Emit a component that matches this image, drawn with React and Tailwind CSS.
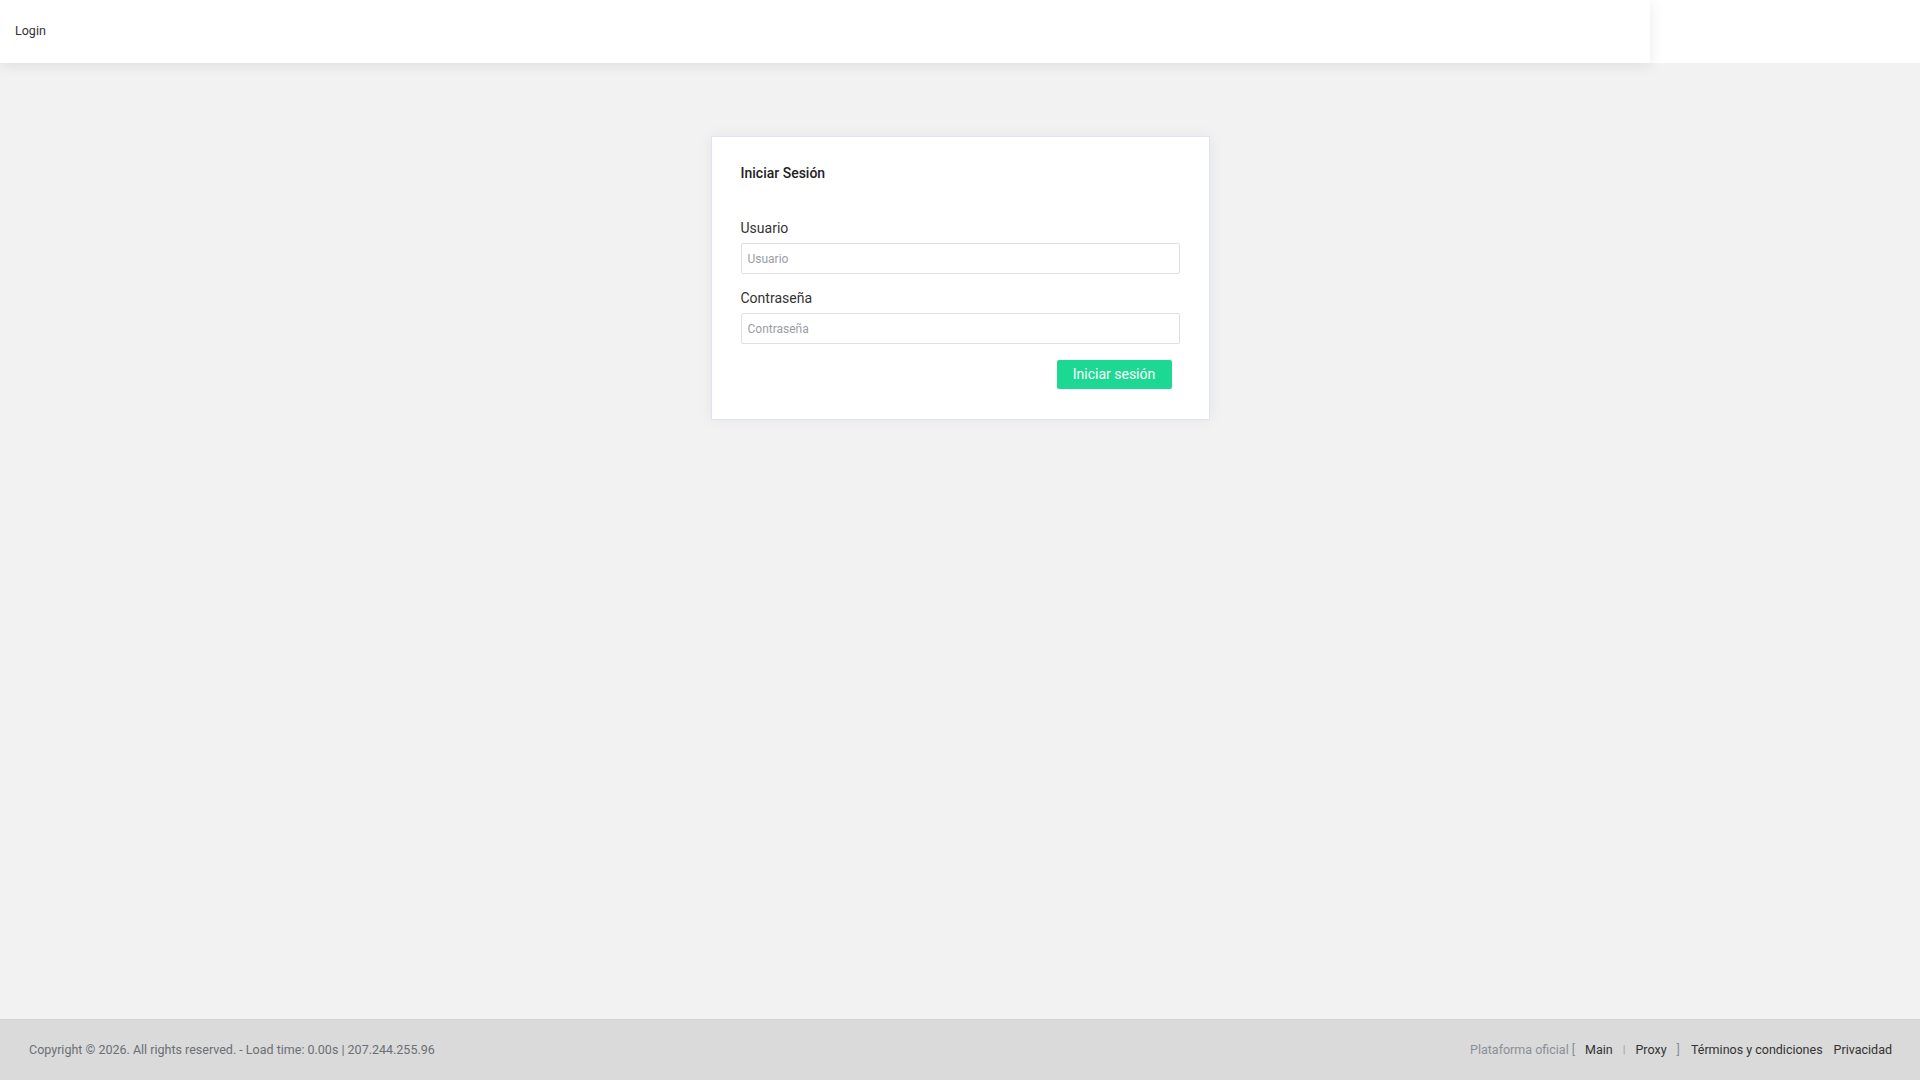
import React from 'react';

// Pantalla de acceso: barra superior, tarjeta de inicio de sesión y pie.

const font = { fontFamily: 'Roboto, "Noto Sans", sans-serif' };

const Field = ({ label, type = 'text', placeholder }) => (
  <div className="flex flex-col">
    <label className="text-[14px] leading-[20px] text-[#333]">{label}</label>
    <input
      type={type}
      placeholder={placeholder}
      className="mt-[5px] h-[31px] w-full rounded-[2px] border border-[#dde1e6] bg-white px-[6px] text-[12px] text-[#333] outline-none placeholder:text-[#9a9ea4]"
    />
  </div>
);

export default function App() {
  return (
    <div className="flex min-h-screen flex-col bg-[#f2f2f2]" style={font}>
      {/* Top bar */}
      <div className="flex h-[63px] bg-white">
        <div className="relative z-10 flex w-[1650px] items-center bg-white px-[15px] shadow-[0_2px_14px_rgba(0,0,0,0.09)]">
          <span className="text-[12.5px] text-[#333]">Login</span>
        </div>
        <div className="flex-1 bg-white" />
      </div>

      {/* Main */}
      <main className="flex flex-1 justify-center pt-[73px]">
        <div className="h-[284px] w-[499px] border border-[#dde6f0] bg-white px-[29px] pt-[26px] shadow-[0_0_14px_rgba(0,0,0,0.06)]">
          <h2 className="text-[14px] font-medium leading-[20px] text-[#222]">Iniciar Sesión</h2>
          <div className="mt-[35px] flex flex-col gap-[14px]">
            <Field label="Usuario" placeholder="Usuario" />
            <Field label="Contraseña" type="password" placeholder="Contraseña" />
          </div>
          <div className="mt-[16px] flex justify-end pr-[8px]">
            <button className="h-[29px] w-[115px] rounded-[2px] bg-[#1dd893] text-[14px] text-white">
              Iniciar sesión
            </button>
          </div>
        </div>
      </main>

      {/* Footer */}
      <footer className="flex h-[61px] items-center justify-between border-t border-[#cfd2d6] bg-[#dadada] pl-[29px] pr-[28px] text-[12.5px]">
        <span className="text-[#6b6f75]">
          Copyright © 2026. All rights reserved. - Load time: 0.00s | 207.244.255.96
        </span>
        <div className="flex items-center text-[#333]">
          <span className="text-[#8a8f96]">Plataforma oficial [</span>
          <a className="ml-[10px]">Main</a>
          <span className="mx-[10px] text-[11px] text-[#9a9ea4]">|</span>
          <a>Proxy</a>
          <span className="ml-[10px] text-[#8a8f96]">]</span>
          <a className="ml-[11px]">Términos y condiciones</a>
          <a className="ml-[11px]">Privacidad</a>
        </div>
      </footer>
    </div>
  );
}
